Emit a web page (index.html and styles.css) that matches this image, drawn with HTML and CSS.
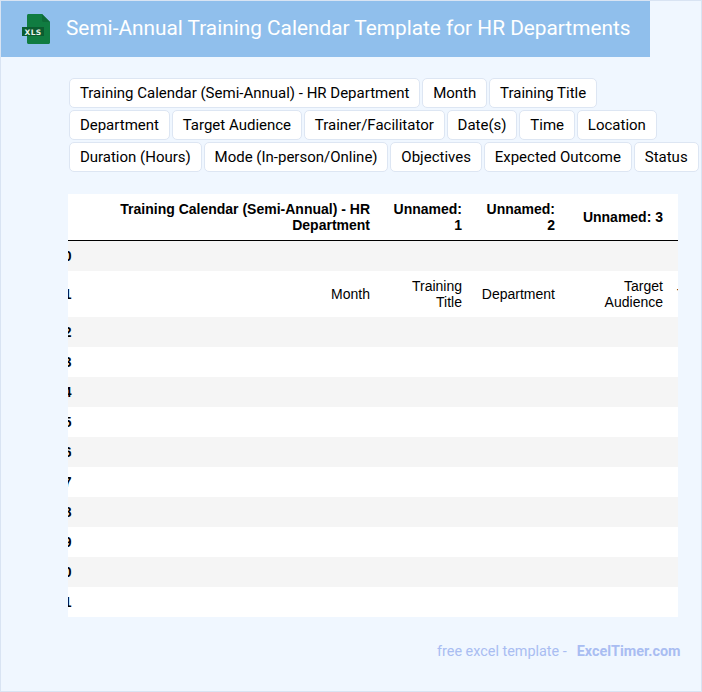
FILE: index.html
```
<!DOCTYPE html>
<html lang="en">
<head>
<meta charset="utf-8">
<title>Semi-Annual Training Calendar Template for HR Departments</title>
<link rel="stylesheet" href="styles.css">
</head>
<body>
<div class="page">
  <header class="banner">
    <svg class="logo" width="32" height="32" viewBox="0 0 32 32" aria-hidden="true">
      <path d="M5 2.500C5 1.700 5.700 1 6.500 1H20l8 8V29.500c0 .8-.7 1.500-1.500 1.500H6.500C5.700 31 5 30.300 5 29.500Z" fill="#107c41"/>
      <path d="M20 1l8 8H21.500C20.700 9 20 8.300 20 7.500Z" fill="#0e6b38"/>
      <rect x="0" y="14" width="22" height="9" fill="#0b5c30"/>
      <text class="logo-text" x="11" y="21.500" text-anchor="middle">XLS</text>
    </svg>
    <h1 class="title">Semi-Annual Training Calendar Template for HR Departments</h1>
  </header>
  <nav class="tags">
    <span class="tag">Training Calendar (Semi-Annual) - HR Department</span>
    <span class="tag">Month</span>
    <span class="tag">Training Title</span>
    <span class="tag">Department</span>
    <span class="tag">Target Audience</span>
    <span class="tag">Trainer/Facilitator</span>
    <span class="tag">Date(s)</span>
    <span class="tag">Time</span>
    <span class="tag">Location</span>
    <span class="tag">Duration (Hours)</span>
    <span class="tag">Mode (In-person/Online)</span>
    <span class="tag">Objectives</span>
    <span class="tag">Expected Outcome</span>
    <span class="tag">Status</span>
  </nav>
  <div class="table-wrap">
    <table class="sheet">
      <colgroup>
        <col class="c-idx"><col class="c-1"><col class="c-2"><col class="c-3"><col class="c-4"><col class="c-5">
      </colgroup>
      <thead>
        <tr><th></th><th>Training Calendar (Semi-Annual) - HR Department</th><th>Unnamed: 1</th><th>Unnamed: 2</th><th>Unnamed: 3</th><th>Unnamed: 4</th></tr>
      </thead>
      <tbody>
        <tr><th>0</th><td></td><td></td><td></td><td></td><td></td></tr>
        <tr><th>1</th><td>Month</td><td>Training Title</td><td>Department</td><td>Target Audience</td><td class="next">Trainer/Facilitator</td></tr>
        <tr><th>2</th><td></td><td></td><td></td><td></td><td></td></tr>
        <tr><th>3</th><td></td><td></td><td></td><td></td><td></td></tr>
        <tr><th>4</th><td></td><td></td><td></td><td></td><td></td></tr>
        <tr><th>5</th><td></td><td></td><td></td><td></td><td></td></tr>
        <tr><th>6</th><td></td><td></td><td></td><td></td><td></td></tr>
        <tr><th>7</th><td></td><td></td><td></td><td></td><td></td></tr>
        <tr><th>8</th><td></td><td></td><td></td><td></td><td></td></tr>
        <tr><th>9</th><td></td><td></td><td></td><td></td><td></td></tr>
        <tr><th>10</th><td></td><td></td><td></td><td></td><td></td></tr>
        <tr><th>11</th><td></td><td></td><td></td><td></td><td></td></tr>
      </tbody>
    </table>
  </div>
  <footer class="credit">
    <span>free excel template -</span>
    <strong class="brand">ExcelTimer.com</strong>
  </footer>
</div>
</body>
</html>
```
FILE: styles.css
```
* { box-sizing: border-box; }
html, body { margin: 0; padding: 0; }
body { background: #f0f7ff; }
.page {
  width: 702px;
  height: 692px;
  border: 1px solid #d9e4f3;
  background: #f0f7ff;
  overflow: hidden;
  font-family: Roboto, sans-serif;
}
.banner {
  width: 649px;
  height: 56px;
  background: #90bfec;
  display: flex;
  align-items: center;
  padding-left: 21px;
  gap: 12px;
}
.logo { flex: none; }
.logo-text { font: 700 7.5px "DejaVu Sans", sans-serif; fill: #e8f3ec; letter-spacing: .3px; }
.title {
  margin: 0 0 3px;
  font-size: 20.8px;
  font-weight: 400;
  color: #fff;
  white-space: nowrap;
}
.tags {
  display: flex;
  flex-wrap: wrap;
  gap: 2px;
  width: 630.3px;
  margin: 21px 0 0 68px;
}
.tag {
  height: 30px;
  padding: 0 9.9px;
  display: flex;
  align-items: center;
  background: #fff;
  border: 1px solid #dde6f3;
  border-radius: 5px;
  font-size: 15px;
  color: #000;
  white-space: nowrap;
}
.table-wrap {
  width: 610px;
  margin: 22px 0 0 67px;
  overflow: hidden;
  background: #fff;
}
.sheet {
  table-layout: fixed;
  width: 830px;
  margin-left: -22px;
  border-collapse: collapse;
  font-family: "Liberation Sans", Arial, sans-serif;
  font-size: 14px;
  line-height: 16px;
  color: #000;
}
.c-idx { width: 31px; }
.c-1 { width: 299px; }
.c-2 { width: 92px; }
.c-3 { width: 93px; }
.c-4 { width: 108px; }
.c-5 { width: 207px; }
.sheet th, .sheet td {
  padding: 7px 6px 7px 8px;
  text-align: right;
  vertical-align: middle;
}
.sheet tbody th { padding-right: 5.5px; }
.sheet thead tr { border-bottom: 1px solid #000; }
.sheet tbody tr:nth-child(odd) { background: #f5f5f5; }
.sheet tbody tr { height: 30px; }
.sheet td.next { text-align: left; }
.credit {
  display: flex;
  justify-content: flex-end;
  gap: 10px;
  margin-top: 25px;
  padding-right: 20.5px;
  font-size: 14.4px;
  line-height: 20px;
  color: #a9bdf2;
}
.brand { font-weight: 700; }
```
